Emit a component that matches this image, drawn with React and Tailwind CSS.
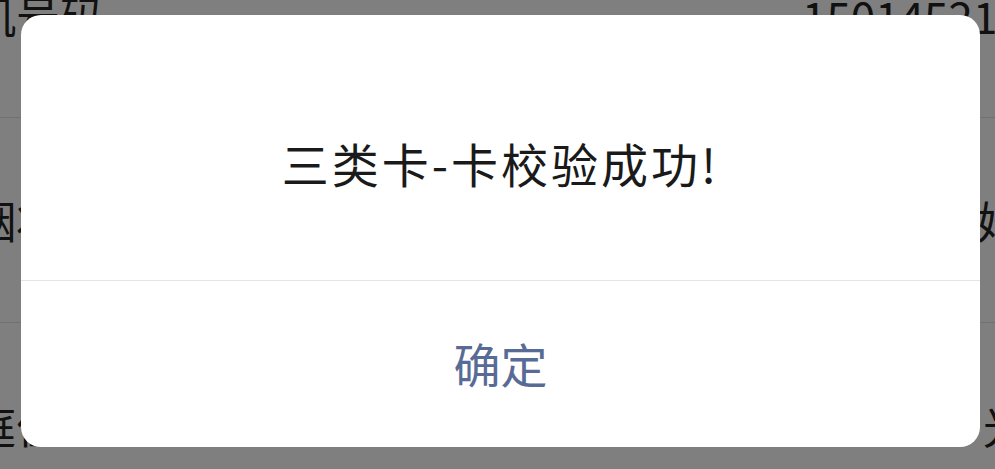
import React from "react";

const rows = [
  { label: "手机号码", value: "15014521234", valueLeft: "ml-[874px]" },
  { label: "婚姻状况", value: "已婚", valueLeft: "ml-[1005px]" },
  { label: "家庭住址", value: "光明路", valueLeft: "ml-[1055px]" },
];

const cjk = { fontFamily: '"Noto Sans CJK SC", "Noto Sans", sans-serif' };

const App = () => {
  return (
    <div className="relative h-[469px] w-full overflow-hidden bg-white" style={cjk}>
      {/* page behind the dialog */}
      <div className="-mt-[87px] -ml-[72px] w-[1200px]">
        {rows.map((row) => (
          <div
            key={row.label}
            className="flex h-[205px] items-center border-b border-[#e3e3e3] text-[44px] leading-none text-[#222]"
          >
            <span className="w-0 whitespace-nowrap">{row.label}</span>
            <span className={`whitespace-nowrap ${row.valueLeft}`}>{row.value}</span>
          </div>
        ))}
      </div>

      {/* mask + alert */}
      <div className="absolute inset-0 bg-black/50">
        <div className="mt-[15px] ml-[21px] flex h-[432px] w-[959px] flex-col overflow-hidden rounded-[20px] bg-white">
          <div className="flex h-[265px] items-center justify-center pt-[30px] text-[47px] leading-none tracking-[3px] text-[#1a1a1a]">
            三类卡-卡校验成功!
          </div>
          <div className="flex flex-1 items-center justify-center border-t border-[#e5e5e5] pb-[3px] text-[47px] leading-none text-[#576b95]">
            确定
          </div>
        </div>
      </div>
    </div>
  );
};

export default App;
